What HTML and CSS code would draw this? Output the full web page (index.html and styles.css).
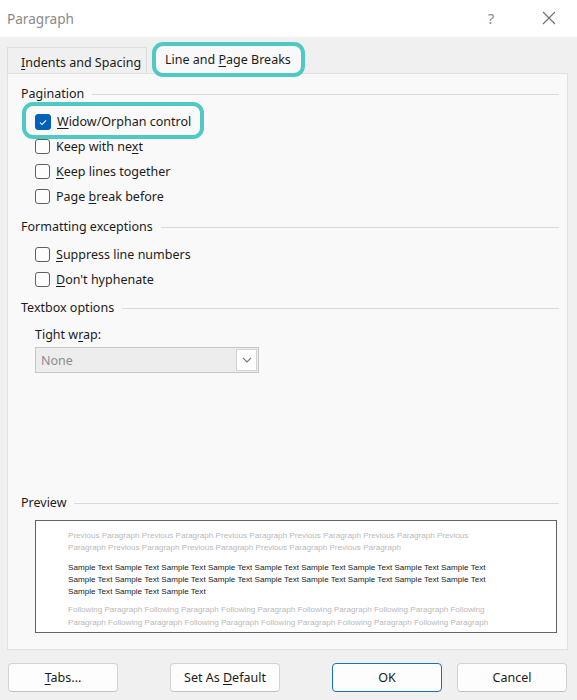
FILE: index.html
```html
<!DOCTYPE html>
<html>
<head>
<meta charset="utf-8">
<link rel="stylesheet" href="styles.css">
</head>
<body>
<div class="titlebar">
  <span class="title">Paragraph</span>
  <span class="help">?</span>
  <span class="close"><svg width="14" height="14" viewBox="0 0 14 14"><path d="M1 1 L13 13 M13 1 L1 13" stroke="#6e6e6e" stroke-width="1.1" fill="none"/></svg></span>
</div>
<div class="dialog">
  <div class="tabs">
    <div class="tab"><span><u>I</u>ndents and Spacing</span></div>
    <div class="tab active"><span>Line and <u>P</u>age Breaks</span></div>
  </div>
  <div class="panel">
    <div class="group-head"><span>Pagination</span><i class="rule"></i></div>
    <div class="options first">
      <div class="option"><span class="opt hl"><span class="box checked"><svg width="15" height="15" viewBox="0 0 15 15"><path d="M4.3 7.6 L6.5 9.7 L10.8 5.3" stroke="#fff" stroke-width="1.2" fill="none"/></svg></span><span><u>W</u>idow/Orphan control</span></span></div>
      <div class="option"><span class="opt"><span class="box"></span><span>Keep with ne<u>x</u>t</span></span></div>
      <div class="option"><span class="opt"><span class="box"></span><span><u>K</u>eep lines together</span></span></div>
      <div class="option"><span class="opt"><span class="box"></span><span>Page <u>b</u>reak before</span></span></div>
    </div>
    <div class="group-head g2"><span>Formatting exceptions</span><i class="rule"></i></div>
    <div class="options">
      <div class="option"><span class="opt"><span class="box"></span><span><u>S</u>uppress line numbers</span></span></div>
      <div class="option"><span class="opt"><span class="box"></span><span><u>D</u>on't hyphenate</span></span></div>
    </div>
    <div class="group-head g3"><span>Textbox options</span><i class="rule"></i></div>
    <div class="field-label">Tight w<u>r</u>ap:</div>
    <div class="select">
      <span class="select-value">None</span>
      <span class="select-btn"><svg width="10" height="6" viewBox="0 0 10 6"><path d="M1 1 L5 5 L9 1" stroke="#7a7a7a" stroke-width="1.1" fill="none"/></svg></span>
    </div>
    <div class="group-head preview-head"><span>Preview</span><i class="rule"></i></div>
    <div class="preview">
      <div class="pv-group muted">
        <div class="pv-line">Previous Paragraph Previous Paragraph Previous Paragraph Previous Paragraph Previous Paragraph Previous</div>
        <div class="pv-line">Paragraph Previous Paragraph Previous Paragraph Previous Paragraph Previous Paragraph</div>
      </div>
      <div class="pv-group sample">
        <div class="pv-line">Sample Text Sample Text Sample Text Sample Text Sample Text Sample Text Sample Text Sample Text Sample Text</div>
        <div class="pv-line">Sample Text Sample Text Sample Text Sample Text Sample Text Sample Text Sample Text Sample Text Sample Text</div>
        <div class="pv-line">Sample Text Sample Text Sample Text</div>
      </div>
      <div class="pv-group muted">
        <div class="pv-line">Following Paragraph Following Paragraph Following Paragraph Following Paragraph Following Paragraph Following</div>
        <div class="pv-line">Paragraph Following Paragraph Following Paragraph Following Paragraph Following Paragraph Following Paragraph</div>
        <div class="pv-line">Following Paragraph Following Paragraph Following Paragraph Following Paragraph Following Paragraph Following</div>
      </div>
    </div>
  </div>
  <div class="buttons">
    <div class="btn-group left">
      <button class="btn"><u>T</u>abs...</button>
      <button class="btn">Set As <u>D</u>efault</button>
    </div>
    <div class="btn-group right">
      <button class="btn primary">OK</button>
      <button class="btn">Cancel</button>
    </div>
  </div>
</div>
</body>
</html>
```

FILE: styles.css
```css
* { box-sizing: border-box; }
html, body {
  margin: 0;
  padding: 0;
  width: 577px;
  height: 700px;
  overflow: hidden;
}
body {
  background: #f0f0f0;
  font-family: "Noto Sans", "Open Sans", sans-serif;
  font-size: 12.5px;
  color: #1b1b1b;
}
u { text-decoration: underline; text-underline-offset: 2px; text-decoration-thickness: 1px; }

.titlebar {
  height: 37px;
  background: #ffffff;
  display: flex;
  align-items: center;
  padding-left: 7px;
}
.title {
  font-size: 13.6px;
  color: #8a8a8a;
  flex: 1;
  margin-top: -1px;
}
.help {
  font-size: 15px;
  color: #8a8a8a;
  width: 14px;
  text-align: center;
  margin-right: 44px;
  margin-top: -1px;
}
.close {
  display: flex;
  width: 14px;
  height: 14px;
  margin-right: 21px;
  margin-top: -1px;
}

.dialog {
  display: flex;
  flex-direction: column;
}

.tabs {
  display: flex;
  align-items: flex-end;
  height: 36px;
  padding-left: 7px;
  position: relative;
  z-index: 2;
}
.tab {
  height: 26px;
  width: 140px;
  border: 1px solid #dedede;
  border-bottom: none;
  display: flex;
  align-items: center;
  padding-left: 13px;
  padding-top: 3px;
  background: #f0f0f0;
}
.tab.active {
  width: 153px;
  height: 35px;
  margin-left: 5px;
  margin-bottom: -4px;
  border: 4px solid #4fc9c3;
  border-radius: 11px;
  background: #f9f9f9;
  padding-left: 9px;
  padding-top: 0;
}

.panel {
  margin-left: 7px;
  width: 561px;
  height: 577px;
  border: 1px solid #e0e0e0;
  background: #f9f9f9;
  padding: 10px 8px 16px 13px;
  display: flex;
  flex-direction: column;
}

.group-head {
  display: flex;
  align-items: center;
  height: 20px;
  line-height: 20px;
}
.group-head .rule {
  flex: 1;
  height: 1px;
  background: #dadada;
  margin-left: 8px;
  margin-top: 1px;
}
.g2 { margin-top: 8px; }
.g3 { margin-top: 6px; }

.options { margin-top: 5px; padding-left: 14px; }
.option {
  height: 25px;
  display: flex;
  align-items: center;
}
.opt {
  display: inline-flex;
  align-items: center;
  position: relative;
  height: 25px;
}
.opt.hl::after {
  content: "";
  position: absolute;
  left: -13px;
  right: -13px;
  top: -7px;
  bottom: -5px;
  border: 4px solid #4fc9c3;
  border-radius: 11px;
}
.box {
  width: 15px;
  height: 15px;
  border: 1px solid #5f5f5f;
  border-radius: 3px;
  background: #fdfdfd;
  margin-right: 6px;
  display: inline-flex;
}
.box.checked {
  background: #005fb8;
  border-color: #005fb8;
  width: 16px;
  height: 16px;
}

.field-label {
  margin-top: 7px;
  padding-left: 14px;
  height: 20px;
  line-height: 20px;
}
.select {
  margin-top: 2px;
  margin-left: 14px;
  width: 224px;
  height: 26px;
  border: 1px solid #c6c6c6;
  background: #ededed;
  display: flex;
  align-items: stretch;
}
.select-value {
  flex: 1;
  color: #8c8c8c;
  padding-left: 5px;
  display: flex;
  align-items: center;
}
.select-btn {
  width: 21px;
  margin: 1px;
  background: #ffffff;
  border: 1px solid #d2d2d2;
  display: flex;
  align-items: center;
  justify-content: center;
}

.preview-head { margin-top: auto; }
.preview {
  margin-top: 7px;
  margin-left: 14px;
  width: 522px;
  height: 113px;
  border: 1px solid #646464;
  background: #ffffff;
  overflow: hidden;
  padding: 9px 0 0 32px;
  font-family: "Liberation Sans", sans-serif;
  font-size: 8.1px;
}
.pv-line {
  height: 12.3px;
  line-height: 12.3px;
  white-space: nowrap;
}
.muted { color: #b9b9b9; }
.sample { color: #222222; margin-top: 7px; margin-bottom: 6px; }

.buttons {
  margin-top: 13px;
  margin-left: 8px;
  width: 559px;
  display: flex;
  justify-content: space-between;
}
.btn-group { display: flex; }
.btn-group.left { gap: 52px; }
.btn-group.right { gap: 15px; }
.btn {
  width: 110px;
  height: 29px;
  border: 1px solid #d3d3d3;
  border-bottom-color: #c2c2c2;
  border-radius: 4px;
  background: #fdfdfd;
  font-family: "Noto Sans", "Open Sans", sans-serif;
  font-size: 12.5px;
  color: #1b1b1b;
  padding: 0;
}
.btn.primary {
  border: 1px solid #1a6fbf;
}
```
